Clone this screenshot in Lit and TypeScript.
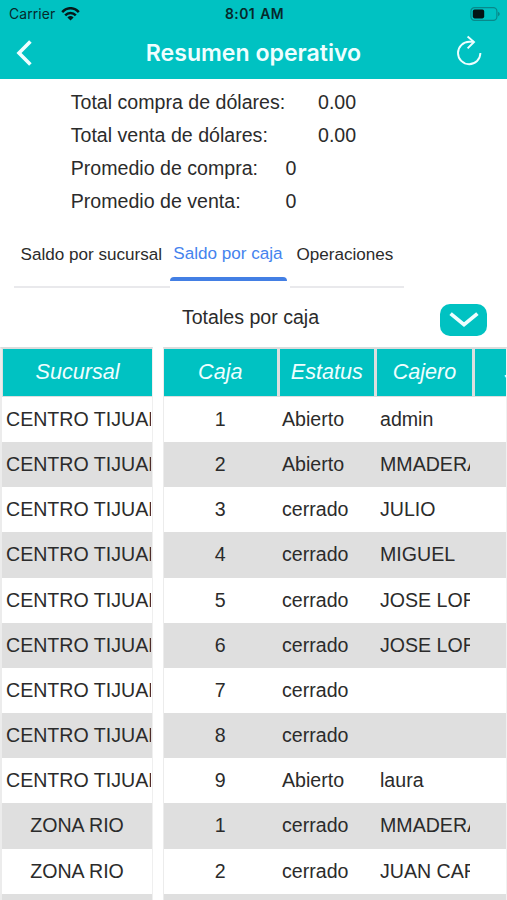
import { LitElement, html, css } from "lit";
import { customElement } from "lit/decorators.js";

type Row = [sucursal: string, caja: string, estatus: string, cajero: string];

const TIJUANA = "CENTRO TIJUANA";
const ROWS: Row[] = [
  [TIJUANA, "1", "Abierto", "admin"],
  [TIJUANA, "2", "Abierto", "MMADERA"],
  [TIJUANA, "3", "cerrado", "JULIO"],
  [TIJUANA, "4", "cerrado", "MIGUEL"],
  [TIJUANA, "5", "cerrado", "JOSE LORENZO"],
  [TIJUANA, "6", "cerrado", "JOSE LORENZO"],
  [TIJUANA, "7", "cerrado", ""],
  [TIJUANA, "8", "cerrado", ""],
  [TIJUANA, "9", "Abierto", "laura"],
  ["ZONA RIO", "1", "cerrado", "MMADERA"],
  ["ZONA RIO", "2", "cerrado", "JUAN CARLOS"],
  ["", "", "", ""],
];

@customElement("app-root")
export class AppRoot extends LitElement {
  static styles = css`
    :host {
      display: flex;
      flex-direction: column;
      width: 507px;
      height: 900px;
      overflow: hidden;
      background: #fff;
      color: #2b2b2b;
      font: 19.6px "Liberation Sans", Arial, sans-serif;
      white-space: nowrap;
    }
    * { box-sizing: border-box; }
    svg { display: block; }
    .top { flex: none; height: 79px; background: #00c2c2; font-family: Inter, sans-serif; }
    .status {
      display: grid;
      grid-template-columns: 1fr auto 1fr;
      align-items: center;
      height: 27px;
      padding: 0 7px 0 9px;
      color: #06292b;
      font-size: 13.9px;
    }
    .carrier { display: flex; align-items: center; gap: 6px; letter-spacing: 0.1px; }
    .clock { font-weight: 600; letter-spacing: 0.45px; word-spacing: 1px; }
    .battery { justify-self: end; }
    .nav {
      display: grid;
      grid-template-columns: 60px 1fr 60px;
      align-items: center;
      height: 51px;
      color: #effeff;
    }
    .title { text-align: center; font-size: 23.1px; font-weight: 600; }
    .back { padding-left: 14px; }
    .reload { padding-left: 8px; }
    .summary { flex: none; padding: 6px 0 0 70.7px; height: 139px; }
    .line { display: flex; height: 33px; line-height: 34px; }
    .wide { width: 247.3px; }
    .narrow { width: 214.8px; }
    .tabs { flex: none; display: flex; height: 71px; padding-left: 14px; font-size: 17.1px; }
    .tab {
      height: 70px;
      padding: 27px 0 0 6.5px;
      line-height: 20px;
      border-bottom: 2px solid #e9e9ec;
    }
    .first { width: 156px; }
    .active {
      position: relative;
      width: 120px;
      height: 63px;
      padding: 26px 0 0 3.3px;
      color: #4583ee;
      border-bottom: 0;
    }
    .active::after {
      content: "";
      position: absolute;
      left: 0;
      right: 3px;
      bottom: 0;
      height: 4px;
      border-radius: 4px 4px 0 0;
      background: #437fe4;
    }
    .last { width: 114px; }
    .bar {
      flex: none;
      display: grid;
      grid-template-columns: 1fr 186px 1fr;
      align-items: start;
      height: 58px;
    }
    .heading { grid-column: 2; text-align: center; line-height: 24px; padding-top: 16px; margin-left: -6px; }
    .toggle {
      justify-self: end;
      display: grid;
      place-items: center;
      width: 47px;
      height: 32px;
      margin: 15px 20px 0 0;
      border-radius: 10px;
      background: #00c2c2;
    }
    .tables { display: flex; gap: 10px; }
    .table { flex: none; border-top: 2px solid #dcdcdc; border-left: 2px solid #ececec; }
    .left { width: 153px; border-right: 1px solid #efefef; }
    .right { width: 344px; border-left-width: 1px; border-right: 1px solid #f0f0f0; }
    .row { display: flex; height: 45.2px; line-height: 45.3px; background: #fff; }
    .row:nth-child(odd) { background: #dfdfdf; }
    .head.row {
      height: 47.8px;
      line-height: 46.4px;
      padding-bottom: 1px;
      gap: 3px;
      background: #dcdfdf;
      color: #effeff;
      font-size: 21.6px;
      font-style: italic;
      overflow: hidden;
    }
    .head .cell { background: #00c2c2; padding: 0; text-align: center; }
    .cell { flex: none; overflow: hidden; }
    .sucursal { width: 149px; margin-left: 1px; padding-left: 3px; }
    .row:not(.head) .sucursal { width: 148px; }
    .row:not(.head) .sucursal.centered { padding: 0; text-align: center; }
    .caja { width: 112.5px; text-align: center; }
    .estatus { width: 94.5px; padding-left: 2.5px; }
    .row:not(.head) .estatus { margin-left: 3px; }
    .cajero { width: 95px; }
    .row:not(.head) .cajero { width: 90.4px; margin-left: 6px; }
    .head .next { width: 95px; padding-left: 29px; text-align: left; }
  `;

  render() {
    return html`
      <header class="top">
        <div class="status">
          <span class="carrier">Carrier
            <svg width="19" height="14" viewBox="0 0 19 14" fill="none" stroke="#06191a" stroke-width="2.5">
              <path d="M1.2 5.1C6-.1 13-.1 17.8 5.1M4.2 8.3C7.2 5.2 11.8 5.2 14.8 8.3" />
              <path d="M9.5 13.5 6.4 10.4Q9.5 7.7 12.6 10.4Z" fill="#06191a" stroke="none" />
            </svg>
          </span>
          <span class="clock">8:01 AM</span>
          <svg class="battery" width="30" height="14" viewBox="0 0 30 14">
            <rect x=".9" y=".7" width="26" height="12.6" rx="3.6" fill="none" stroke="#08898b" stroke-width="1.2" />
            <rect x="2.8" y="2.6" width="11.4" height="8.8" rx="1.8" fill="#031314" />
            <path d="M28 4.8q1.8.7 1.8 2.2T28 9.2Z" fill="#08898b" />
          </svg>
        </div>
        <div class="nav">
          <svg class="back" width="34" height="28" viewBox="0 0 20 28" fill="none" stroke="#effeff" stroke-width="3.6">
            <path d="M16.4 2.4 5 14l11.4 11.6" />
          </svg>
          <span class="title">Resumen operativo</span>
          <svg class="reload" width="38" height="36" viewBox="0 0 30 36" fill="none" stroke="#effeff" stroke-width="1.9">
            <path d="M25.4 18.1a11.2 11.2 0 1 1-11.2-11.3h4.4" />
            <path d="m12.6 1.5 6.4 5.5-6.4 6.4" />
          </svg>
        </div>
      </header>
      <section class="summary">
        <div class="line"><span class="wide">Total compra de dólares:</span><span>0.00</span></div>
        <div class="line"><span class="wide">Total venta de dólares:</span><span>0.00</span></div>
        <div class="line"><span class="narrow">Promedio de compra:</span><span>0</span></div>
        <div class="line"><span class="narrow">Promedio de venta:</span><span>0</span></div>
      </section>
      <nav class="tabs">
        <div class="tab first">Saldo por sucursal</div>
        <div class="tab active">Saldo por caja</div>
        <div class="tab last">Operaciones</div>
      </nav>
      <div class="bar">
        <span class="heading">Totales por caja</span>
        <span class="toggle">
          <svg width="32" height="20" viewBox="0 0 32 20" fill="none" stroke="#effeff" stroke-width="3.8">
            <path d="m2.6 3.6 13.4 11L29.4 3.6" />
          </svg>
        </span>
      </div>
      <div class="tables">
        <div class="table left">
          <div class="row head"><span class="cell sucursal">Sucursal</span></div>
          ${ROWS.map(([sucursal]) => html`
            <div class="row">
              <span class="cell sucursal ${sucursal === TIJUANA ? "" : "centered"}">${sucursal}</span>
            </div>`)}
        </div>
        <div class="table right">
          <div class="row head">
            <span class="cell caja">Caja</span>
            <span class="cell estatus">Estatus</span>
            <span class="cell cajero">Cajero</span>
            <span class="cell next">Saldo</span>
          </div>
          ${ROWS.map(([, caja, estatus, cajero]) => html`
            <div class="row">
              <span class="cell caja">${caja}</span>
              <span class="cell estatus">${estatus}</span>
              <span class="cell cajero">${cajero}</span>
            </div>`)}
        </div>
      </div>
    `;
  }
}
